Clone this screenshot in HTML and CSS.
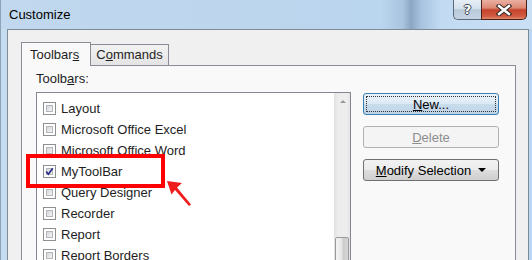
FILE: index.html
```html
<!DOCTYPE html>
<html>
<head>
<meta charset="utf-8">
<link rel="stylesheet" href="styles.css">
</head>
<body>
<div class="frame">
  <div class="titlebar">
    <span class="title">Customize</span>
    <div class="caption">
      <div class="cbtn help"><span class="qmark">?</span></div>
      <div class="cbtn close">
        <svg width="16" height="12" viewBox="0 0 16 12">
          <path d="M3 2 L13 10 M13 2 L3 10" stroke="#3b2a28" stroke-width="4.6" stroke-linecap="square" fill="none"/>
          <path d="M3 2 L13 10 M13 2 L3 10" stroke="#ffffff" stroke-width="2.4" stroke-linecap="square" fill="none"/>
        </svg>
      </div>
    </div>
  </div>
  <div class="client">
    <div class="tabs">
      <div class="tab active">Toolbar<u>s</u></div>
      <div class="tab">C<u>o</u>mmands</div>
    </div>
    <div class="panel">
      <div class="label">Toolb<u>a</u>rs:</div>
      <div class="row">
        <div class="listbox">
          <div class="items">
            <div class="item"><span class="cb"></span><span>Layout</span></div>
            <div class="item"><span class="cb"></span><span>Microsoft Office Excel</span></div>
            <div class="item"><span class="cb"></span><span>Microsoft Office Word</span></div>
            <div class="item"><span class="cb checked"><svg class="tick" width="11" height="11" viewBox="0 0 11 11"><path d="M2.2 5.6 L4.4 8.2 L8.8 2.2" stroke="#2a2f86" stroke-width="1.7" fill="none"/></svg></span><span>MyToolBar</span></div>
            <div class="item"><span class="cb"></span><span>Query Designer</span></div>
            <div class="item"><span class="cb"></span><span>Recorder</span></div>
            <div class="item"><span class="cb"></span><span>Report</span></div>
            <div class="item"><span class="cb"></span><span>Report Borders</span></div>
          </div>
          <div class="scroll">
            <div class="sbtn"><span class="uparrow"></span></div>
            <div class="thumb"></div>
          </div>
        </div>
        <div class="buttons">
          <div class="btn default"><span class="focus"><u>N</u>ew...</span></div>
          <div class="btn disabled"><u>D</u>elete</div>
          <div class="btn"><u>M</u>odify Selection<span class="drop"></span></div>
        </div>
      </div>
    </div>
  </div>
  <div class="highlight"></div>
  <svg class="pointer" width="40" height="40" viewBox="160 175 40 40">
    <polygon points="167,181 182,183 177,187.5 191,204.5 189,206 175,190 171.5,194.5" fill="#ee1c1c"/>
  </svg>
</div>
</body>
</html>
```
FILE: styles.css
```css
html, body {
  margin: 0;
  padding: 0;
}
body {
  width: 532px;
  height: 260px;
  overflow: hidden;
  font-family: "Liberation Sans", Arial, sans-serif;
  font-size: 13px;
  color: #1e1e1e;
}
.frame {
  position: relative;
  width: 532px;
  height: 260px;
  box-sizing: border-box;
  border-left: 1px solid #8ea3b8;
  background: linear-gradient(to right, #c6dcf0, #c2daf1 50%, #b9d6f3);
  display: flex;
  flex-direction: column;
  overflow: hidden;
}
.titlebar {
  height: 29px;
  flex: none;
  display: flex;
  align-items: flex-start;
  background: linear-gradient(to right, #c1d8ee 0px, #bad5ee 380px, #a9c4de 402px, #8aa6c2 410px, #a7c3df 420px, #c2dbf3 440px, #c9dff4 532px);
}
.title {
  padding-left: 8px;
  line-height: 29px;
  color: #000;
}
.caption {
  margin-left: auto;
  margin-right: 5px;
  display: flex;
}
.cbtn {
  height: 20px;
  box-sizing: border-box;
  display: flex;
  align-items: center;
  justify-content: center;
  border: 1px solid #5b6877;
  border-top: none;
}
.help {
  width: 28px;
  border-right: none;
  border-radius: 0 0 0 5px;
  background: linear-gradient(#e6eef6, #d4e0ec 45%, #b9c9da 52%, #c6d5e4);
}
.qmark {
  font-family: "DejaVu Sans", sans-serif;
  font-weight: bold;
  font-size: 13px;
  color: #fff;
  line-height: 14px;
  text-shadow: 1px 0 0 #3c4652, -1px 0 0 #3c4652, 0 1px 0 #3c4652, 0 -1px 0 #3c4652;
}
.close {
  width: 46px;
  border-color: #4b2019;
  border-radius: 0 0 5px 0;
  background: linear-gradient(#eab0a2, #dc8873 42%, #c5432b 52%, #d15a40 85%, #e08a6c);
}
.client {
  flex: 1;
  min-height: 0;
  margin: 0 3px 0 6px;
  border: 1px solid #7d8a98;
  border-bottom: none;
  background: #f0f0f0;
  padding: 12px 12px 0 13px;
  display: flex;
  flex-direction: column;
}
.tabs {
  display: flex;
  align-items: flex-end;
  position: relative;
  z-index: 1;
  margin-bottom: -1px;
}
.tab {
  box-sizing: border-box;
  height: 21px;
  width: 79px;
  margin-left: -1px;
  margin-bottom: 1px;
  border: 1px solid #898c95;
  border-bottom: none;
  background: linear-gradient(#f2f2f2, #e4e4e4);
  line-height: 20px;
  text-align: center;
}
.tab.active {
  height: 24px;
  width: 70px;
  margin-left: 0;
  margin-bottom: 0;
  position: relative;
  z-index: 2;
  background: #f9f9f9;
  line-height: 23px;
  text-align: left;
  padding-left: 8px;
}
.panel {
  flex: 1;
  border: 1px solid #898c95;
  background: #f9f9f9;
  padding: 5px 15px 0 14px;
}
.label {
  line-height: 16px;
  margin-bottom: 5px;
}
.row {
  display: flex;
  align-items: flex-start;
}
.listbox {
  width: 315px;
  height: 200px;
  box-sizing: border-box;
  border: 1px solid #828790;
  background: #fff;
  display: flex;
}
.items {
  flex: 1;
  padding: 5px 0 0 6px;
}
.item {
  height: 21px;
  display: flex;
  align-items: center;
  gap: 5px;
}
.cb {
  position: relative;
  width: 13px;
  height: 13px;
  box-sizing: border-box;
  border: 1px solid #8e8f8f;
  background: #fff;
  padding: 2px;
  flex: none;
}
.cb::before {
  content: "";
  display: block;
  width: 100%;
  height: 100%;
  box-sizing: border-box;
  border: 1px solid #b4b8bd;
  background: linear-gradient(135deg, #d3d6da, #f4f4f5);
}
.tick {
  position: absolute;
  left: 0;
  top: 0;
}
.scroll {
  width: 16px;
  flex: none;
  background: linear-gradient(to right, #e2e2e2, #ececec 25%, #eeeeee 75%, #e5e5e5);
  display: flex;
  flex-direction: column;
  align-items: center;
}
.sbtn {
  height: 17px;
  width: 16px;
  display: flex;
  align-items: center;
  justify-content: center;
}
.uparrow {
  width: 0;
  height: 0;
  border-left: 3px solid transparent;
  border-right: 3px solid transparent;
  border-bottom: 3px solid #9a9a9a;
  margin-left: 2px;
}
.thumb {
  margin-top: 127px;
  width: 14px;
  height: 40px;
  box-sizing: border-box;
  border: 1px solid #9a9a9a;
  border-radius: 2px;
  background: linear-gradient(to right, #f4f4f4, #e8e8e8 45%, #cdcdcd 60%, #d5d5d5);
}
.buttons {
  margin-left: 12px;
  margin-top: 1px;
  display: flex;
  flex-direction: column;
  gap: 11px;
}
.btn {
  width: 136px;
  height: 22px;
  box-sizing: border-box;
  border: 1px solid #707070;
  border-radius: 3px;
  background: linear-gradient(#f2f2f2, #ebebeb 48%, #dddddd 52%, #cfcfcf);
  display: flex;
  align-items: center;
  justify-content: center;
  color: #000;
}
.btn.default {
  border-color: #3c7fb1;
  background: linear-gradient(#eaf3fb, #dce9f5 48%, #c9dcec 52%, #bdd3e6);
  padding: 2px;
}
.focus {
  flex: 1;
  align-self: stretch;
  display: flex;
  align-items: center;
  justify-content: center;
  border: 1px dotted #333;
}
.btn.disabled {
  border-color: #adb2b5;
  background: #f4f4f4;
  color: #8d8d8d;
}
.drop {
  width: 0;
  height: 0;
  border-left: 4px solid transparent;
  border-right: 4px solid transparent;
  border-top: 4px solid #000;
  margin-left: 7px;
}
.highlight {
  position: absolute;
  left: 25px;
  top: 154px;
  width: 139px;
  height: 34px;
  box-sizing: border-box;
  border: 4px solid #ff0000;
}
.pointer {
  position: absolute;
  left: 159px;
  top: 175px;
}
```
